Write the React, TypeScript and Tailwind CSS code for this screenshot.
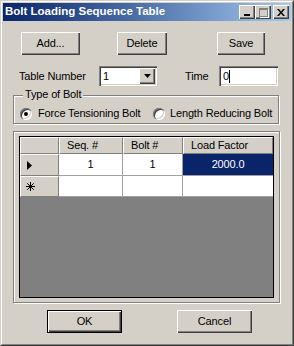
import type { ReactNode } from 'react';

const raised =
  'bg-[#d4d0c8] shadow-[inset_1px_1px_0_#ffffff,inset_-1px_-1px_0_#404040,inset_-2px_-2px_0_#808080]';
const sunken =
  'bg-white shadow-[inset_1px_1px_0_#808080,inset_2px_2px_0_#404040,inset_-1px_-1px_0_#ffffff,inset_-2px_-2px_0_#d4d0c8]';
const etched = 'border border-[#808080] shadow-[inset_1px_1px_0_#ffffff,1px_1px_0_#ffffff]';

function Button({ children, className = '' }: { children: ReactNode; className?: string }) {
  return (
    <div className={`${raised} h-[23px] flex items-center justify-center ${className}`}>
      {children}
    </div>
  );
}

function CaptionButton({ children, className = '' }: { children: ReactNode; className?: string }) {
  return (
    <div className={`${raised} w-[16px] h-[14px] flex items-center justify-center ${className}`}>
      {children}
    </div>
  );
}

function Radio({ checked }: { checked?: boolean }) {
  return (
    <div className="w-[12px] h-[12px] rounded-full bg-white shadow-[inset_1px_1px_0_#808080,inset_2px_2px_0_#404040,inset_-1px_-1px_0_#ffffff,inset_-2px_-2px_0_#d4d0c8] flex items-center justify-center">
      {checked && <div className="w-[4px] h-[4px] rounded-full bg-black" />}
    </div>
  );
}

const headCell = 'bg-[#d4d0c8] border-l border-t border-l-white border-t-white border-r border-b border-r-[#808080] border-b-[#808080]';
const dataCell = 'bg-white text-black border-r border-b border-[#a0a0a0] flex items-center justify-center';

export default function App() {
  return (
    <div className="w-[294px] h-[346px] bg-[#d4d0c8] border border-t-[#d4d0c8] border-l-[#d4d0c8] border-r-[#404040] border-b-[#404040] text-[11px] tracking-[-0.15px] text-black font-['Liberation_Sans',Arial,sans-serif] leading-none select-none antialiased">
      <div className="h-full border border-t-white border-l-white border-r-[#808080] border-b-[#808080] p-px flex flex-col">
        {/* title bar */}
        <div className="h-[18px] flex items-center bg-linear-to-r from-[#0a246a] to-[#a6caf0] pl-[2px] pr-[2px]">
          <span className="flex-1 text-white font-bold text-[11.5px] tracking-normal">Bolt Loading Sequence Table</span>
          <CaptionButton>
            <div className="w-[6px] h-[2px] bg-black mt-[6px] -ml-[1px]" />
          </CaptionButton>
          <CaptionButton>
            <div className="w-[9px] h-[9px] border border-t-2 border-[#808080] shadow-[1px_1px_0_#ffffff]" />
          </CaptionButton>
          <CaptionButton className="ml-[2px]">
            <svg width="8" height="7" viewBox="0 0 8 7">
              <path d="M0 0h2l2 2.5L6 0h2L5 3.5 8 7H6L4 4.5 2 7H0l3-3.5z" fill="#000" />
            </svg>
          </CaptionButton>
        </div>

        {/* action buttons */}
        <div className="mt-[11px] flex">
          <Button className="ml-[18px] w-[59px]">Add...</Button>
          <Button className="ml-[37px] w-[50px]">Delete</Button>
          <Button className="ml-[50px] w-[48px]">Save</Button>
        </div>

        {/* table number / time */}
        <div className="mt-[11px] h-[20px] flex items-center">
          <span className="ml-[16px] w-[80px]">Table Number</span>
          <div className={`${sunken} w-[58px] h-[20px] flex items-center p-[2px]`}>
            <span className="flex-1 pl-[2px]">1</span>
            <div className={`${raised} w-[16px] h-[16px] flex items-center justify-center`}>
              <svg width="7" height="4" viewBox="0 0 7 4">
                <path d="M0 0h7L3.5 4z" fill="#000" />
              </svg>
            </div>
          </div>
          <span className="ml-[28px] w-[34px]">Time</span>
          <div className={`${sunken} w-[59px] h-[20px] flex items-center pl-[4px]`}>
            <span>0</span>
            <div className="w-px h-[13px] bg-black" />
          </div>
        </div>

        {/* type of bolt */}
        <div className={`${etched} relative mt-[9px] ml-[10px] w-[266px] h-[29px] flex items-center pt-[8px] pl-[6px]`}>
          <span className="absolute left-[9px] -top-[7px] bg-[#d4d0c8] px-[2px]">Type of Bolt</span>
          <Radio checked />
          <span className="ml-[6px] w-[115px]">Force Tensioning Bolt</span>
          <Radio />
          <span className="ml-[5px]">Length Reducing Bolt</span>
        </div>

        {/* grid */}
        <div className={`${etched} mt-[7px] ml-[10px] w-[267px] h-[172px] pt-[4px] pl-[5px]`}>
          <div className="w-[255px] h-[162px] border border-black bg-[#808080]">
            <div className="grid grid-cols-[39px_64px_60px_90px] grid-rows-[17px_22px_21px]">
              <div className={headCell} />
              <div className={`${headCell} pl-[7px] flex items-center`}>Seq. #</div>
              <div className={`${headCell} pl-[7px] flex items-center`}>Bolt #</div>
              <div className={`${headCell} pl-[7px] flex items-center`}>Load Factor</div>

              <div className={`${headCell} flex items-center pl-[6px]`}>
                <svg width="5" height="9" viewBox="0 0 5 9">
                  <path d="M0 0l5 4.5L0 9z" fill="#000" />
                </svg>
              </div>
              <div className={dataCell}>1</div>
              <div className={dataCell}>1</div>
              <div className="bg-[#0a246a] text-white border-b border-[#a0a0a0] flex items-center justify-center">2000.0</div>

              <div className={`${headCell} flex items-center pl-[5px]`}>
                <svg width="9" height="9" viewBox="0 0 9 9">
                  <path d="M4.5 0v9M0 4.5h9M1.3 1.3l6.4 6.4M7.7 1.3L1.3 7.7" stroke="#000" strokeWidth="1" />
                </svg>
              </div>
              <div className={dataCell} />
              <div className={dataCell} />
              <div className="bg-white border-b border-[#a0a0a0]" />
            </div>
          </div>
        </div>

        {/* ok / cancel */}
        <div className="mt-[7px] flex">
          <div className="ml-[44px] w-[75px] h-[23px] border border-black">
            <Button className="w-full !h-[21px]">OK</Button>
          </div>
          <Button className="ml-[55px] w-[75px]">Cancel</Button>
        </div>
      </div>
    </div>
  );
}
